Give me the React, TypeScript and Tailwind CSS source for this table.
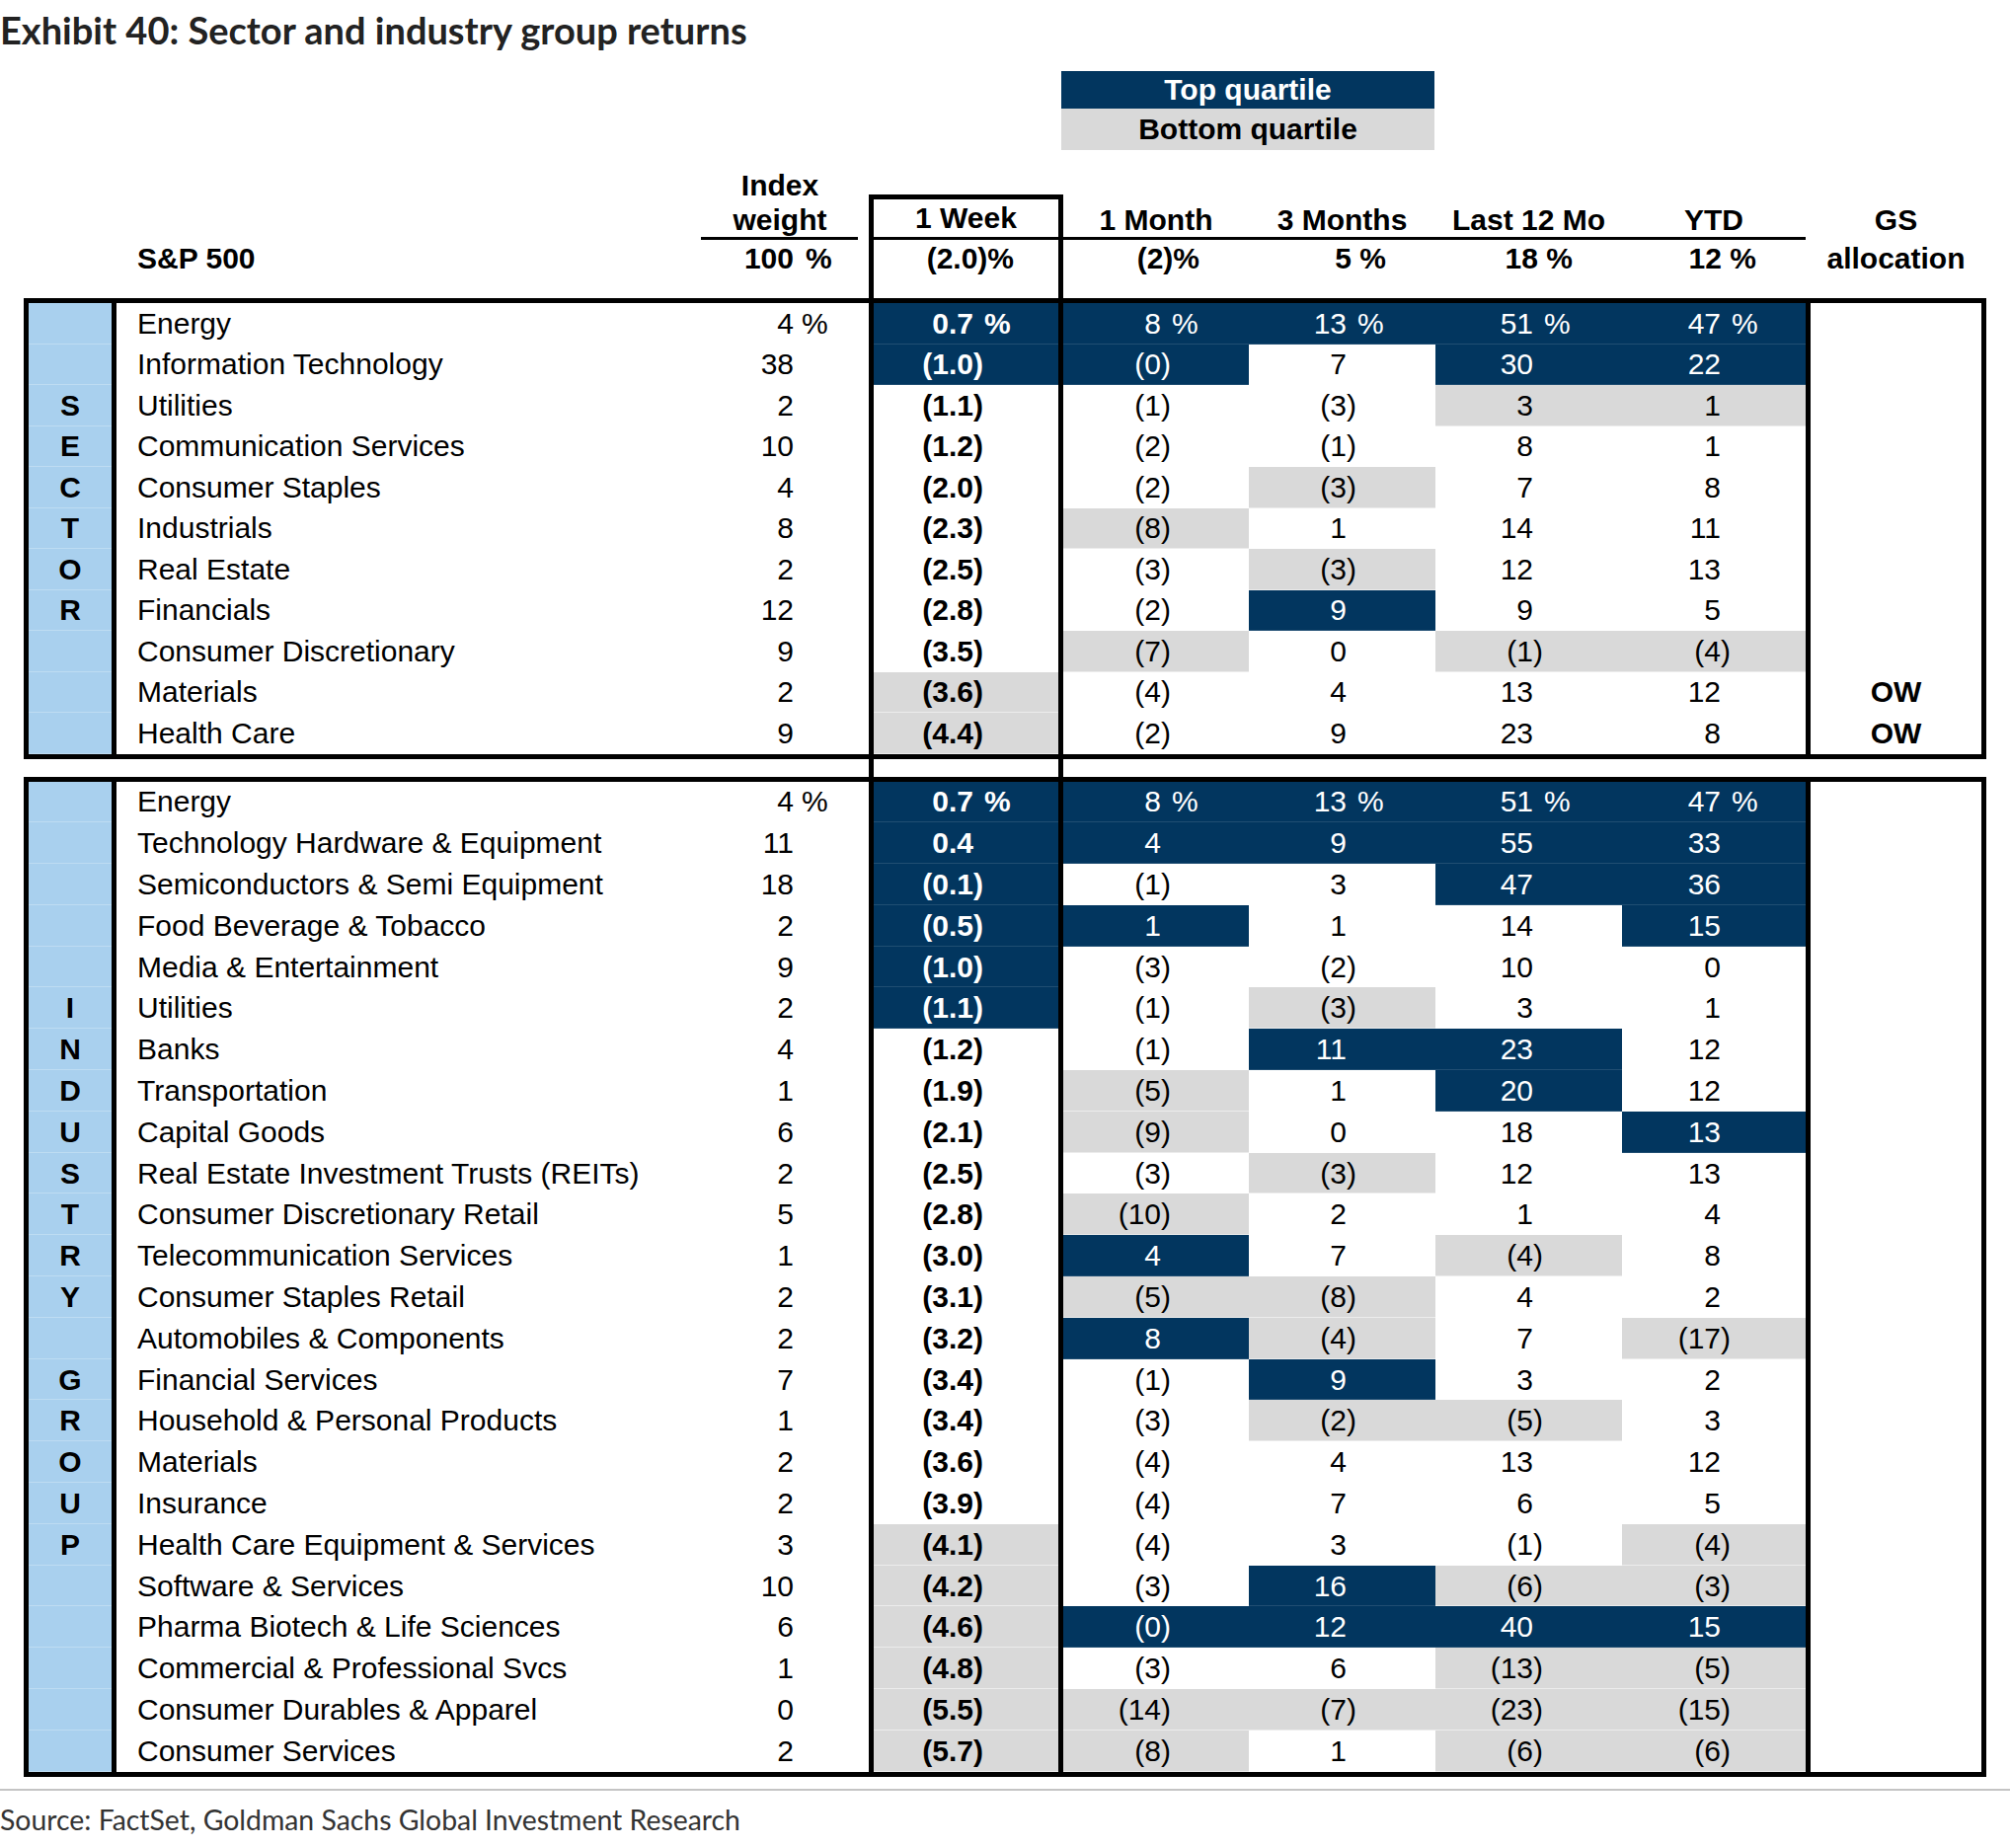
import React from "react";

type Shade = "n" | "g" | "";
type Row = { name: string; w: string; vals: string; gs?: string };

const sector: Row[] = [
  { name: "Energy", w: "4 %", vals: "0.7 %:n,8 %:n,13 %:n,51 %:n,47 %:n" },
  { name: "Information Technology", w: "38", vals: "(1.0):n,(0):n,7:,30:n,22:n" },
  { name: "Utilities", w: "2", vals: "(1.1):,(1):,(3):,3:g,1:g" },
  { name: "Communication Services", w: "10", vals: "(1.2):,(2):,(1):,8:,1:" },
  { name: "Consumer Staples", w: "4", vals: "(2.0):,(2):,(3):g,7:,8:" },
  { name: "Industrials", w: "8", vals: "(2.3):,(8):g,1:,14:,11:" },
  { name: "Real Estate", w: "2", vals: "(2.5):,(3):,(3):g,12:,13:" },
  { name: "Financials", w: "12", vals: "(2.8):,(2):,9:n,9:,5:" },
  { name: "Consumer Discretionary", w: "9", vals: "(3.5):,(7):g,0:,(1):g,(4):g" },
  { name: "Materials", w: "2", vals: "(3.6):g,(4):,4:,13:,12:", gs: "OW" },
  { name: "Health Care", w: "9", vals: "(4.4):g,(2):,9:,23:,8:", gs: "OW" },
];

const industry: Row[] = [
  { name: "Energy", w: "4 %", vals: "0.7 %:n,8 %:n,13 %:n,51 %:n,47 %:n" },
  { name: "Technology Hardware & Equipment", w: "11", vals: "0.4:n,4:n,9:n,55:n,33:n" },
  { name: "Semiconductors & Semi Equipment", w: "18", vals: "(0.1):n,(1):,3:,47:n,36:n" },
  { name: "Food Beverage & Tobacco", w: "2", vals: "(0.5):n,1:n,1:,14:,15:n" },
  { name: "Media & Entertainment", w: "9", vals: "(1.0):n,(3):,(2):,10:,0:" },
  { name: "Utilities", w: "2", vals: "(1.1):n,(1):,(3):g,3:,1:" },
  { name: "Banks", w: "4", vals: "(1.2):,(1):,11:n,23:n,12:" },
  { name: "Transportation", w: "1", vals: "(1.9):,(5):g,1:,20:n,12:" },
  { name: "Capital Goods", w: "6", vals: "(2.1):,(9):g,0:,18:,13:n" },
  { name: "Real Estate Investment Trusts (REITs)", w: "2", vals: "(2.5):,(3):,(3):g,12:,13:" },
  { name: "Consumer Discretionary Retail", w: "5", vals: "(2.8):,(10):g,2:,1:,4:" },
  { name: "Telecommunication Services", w: "1", vals: "(3.0):,4:n,7:,(4):g,8:" },
  { name: "Consumer Staples Retail", w: "2", vals: "(3.1):,(5):g,(8):g,4:,2:" },
  { name: "Automobiles & Components", w: "2", vals: "(3.2):,8:n,(4):g,7:,(17):g" },
  { name: "Financial Services", w: "7", vals: "(3.4):,(1):,9:n,3:,2:" },
  { name: "Household & Personal Products", w: "1", vals: "(3.4):,(3):,(2):g,(5):g,3:" },
  { name: "Materials", w: "2", vals: "(3.6):,(4):,4:,13:,12:" },
  { name: "Insurance", w: "2", vals: "(3.9):,(4):,7:,6:,5:" },
  { name: "Health Care Equipment & Services", w: "3", vals: "(4.1):g,(4):,3:,(1):,(4):g" },
  { name: "Software & Services", w: "10", vals: "(4.2):g,(3):,16:n,(6):g,(3):g" },
  { name: "Pharma Biotech & Life Sciences", w: "6", vals: "(4.6):g,(0):n,12:n,40:n,15:n" },
  { name: "Commercial & Professional Svcs", w: "1", vals: "(4.8):g,(3):,6:,(13):g,(5):g" },
  { name: "Consumer Durables & Apparel", w: "0", vals: "(5.5):g,(14):g,(7):g,(23):g,(15):g" },
  { name: "Consumer Services", w: "2", vals: "(5.7):g,(8):g,1:,(6):g,(6):g" },
];

const sectorLetters = ["", "", "S", "E", "C", "T", "O", "R", "", "", ""];
const industryLetters = [
  "", "", "", "", "", "I", "N", "D", "U", "S", "T", "R", "Y", "", "G", "R", "O", "U", "P", "", "", "", "", "",
];

const shadeClass: Record<Shade, string> = {
  n: "bg-[#02365f] text-white shadow-[inset_0_-1px_0_rgba(255,255,255,0.12)]",
  g: "bg-[#d9d9d9] text-black shadow-[inset_0_-1px_0_rgba(255,255,255,0.5)]",
  "": "bg-white text-black",
};

function parseVals(s: string): [string, Shade][] {
  return s.split(",").map((p) => {
    const i = p.lastIndexOf(":");
    return [p.slice(0, i), p.slice(i + 1) as Shade];
  });
}

function Num({ v, gap }: { v: string; gap: string }) {
  const pct = v.endsWith("%");
  let core = pct ? v.replace(/\s*%$/, "") : v;
  const neg = core.startsWith("(");
  if (neg) core = core.slice(1, -1);
  return (
    <span className="relative whitespace-nowrap">
      {neg ? "(" : ""}
      {core}
      {neg ? <span className="absolute left-full">)</span> : null}
      {pct ? <span className={`absolute left-full ${gap}`}>%</span> : null}
    </span>
  );
}

const dataCols = [
  "w-[188px] pr-[89px]",
  "w-[189px] pr-[90px]",
  "w-[189px] pr-[90px]",
  "w-[186px] pr-[86px]",
];

function TableRow({ r, h, letter }: { r: Row; h: string; letter: string }) {
  const vals = parseVals(r.vals);
  const [week, ...rest] = vals;
  return (
    <div className={`flex ${h}`}>
      <div className="w-[84px] bg-[#a9d0ee] flex items-center justify-center font-bold shadow-[inset_0_-1px_0_rgba(255,255,255,0.25)]">
        {letter}
      </div>
      <div className="w-[5px] bg-black" />
      <div className="w-[592px] pl-[21px] flex items-center whitespace-nowrap">{r.name}</div>
      <div className="w-[170px] flex items-center justify-end pr-[76px]">
        <Num v={r.w} gap="ml-[8px]" />
      </div>
      <div
        className={`w-[197px] border-x-[5px] border-black flex items-center justify-end pr-[86px] font-bold ${shadeClass[week[1]]}`}
      >
        <Num v={week[0]} gap="ml-[11px]" />
      </div>
      {rest.map(([v, s], i) => (
        <div key={i} className={`${dataCols[i]} flex items-center justify-end ${shadeClass[s]}`}>
          <Num v={v} gap="ml-[11px]" />
        </div>
      ))}
      <div className="w-[178px] border-l-[5px] border-black flex items-center justify-center font-bold">
        {r.gs ?? ""}
      </div>
    </div>
  );
}

function HeaderCol({ w, label, value }: { w: string; label: string; value: string }) {
  return (
    <div className={`${w} flex flex-col h-[142px] font-bold`}>
      <div className="h-[45px]" />
      <div className="h-[35px] flex items-center justify-center whitespace-nowrap">{label}</div>
      <div className="h-[3px] bg-black" />
      <div className="h-[37px] flex items-center justify-end pr-[50px] whitespace-nowrap">{value}</div>
      <div className="h-[22px]" />
    </div>
  );
}

export default function App() {
  return (
    <div className="w-[2036px] h-[1872px] bg-white text-black overflow-hidden font-['Liberation_Sans',Arial,sans-serif] text-[30px] leading-none">
      {/* Title */}
      <div className="h-[72px] pt-[8px]">
        <div className="font-['Lato',sans-serif] font-bold text-[38px] leading-[44px] text-[#222] whitespace-nowrap">
          Exhibit 40: Sector and industry group returns
        </div>
      </div>

      {/* Legend */}
      <div className="ml-[1075px] w-[378px] font-bold">
        <div className="h-[38px] bg-[#02365f] text-white flex items-center justify-center">Top quartile</div>
        <div className="h-[42px] bg-[#d9d9d9] text-black flex items-center justify-center">Bottom quartile</div>
      </div>

      {/* Header */}
      <div className="mt-[8px] ml-[29px] flex h-[142px]">
        <div className="w-[89px]" />
        <div className="w-[592px] flex flex-col font-bold">
          <div className="h-[83px]" />
          <div className="h-[37px] pl-[21px] flex items-center">S&amp;P 500</div>
        </div>
        <div className="w-[170px] flex flex-col font-bold">
          <div className="h-[10px]" />
          <div className="h-[35px] pr-[10px] flex items-center justify-center">Index</div>
          <div className="h-[35px] pr-[10px] flex items-center justify-center">weight</div>
          <div className="h-[3px] w-[159px] bg-black" />
          <div className="h-[37px] flex items-center justify-end pr-[76px]">
            <Num v="100 %" gap="ml-[12px]" />
          </div>
        </div>
        <div className="w-[197px] flex flex-col font-bold">
          <div className="h-[37px]" />
          <div className="flex-1 border-x-[5px] border-t-[5px] border-black flex flex-col">
            <div className="h-[38px] flex items-center justify-center">1 Week</div>
            <div className="h-[3px] bg-black" />
            <div className="h-[37px] flex items-center justify-end pr-[45px]">(2.0)%</div>
          </div>
        </div>
        <HeaderCol w="w-[188px]" label="1 Month" value="(2)%" />
        <HeaderCol w="w-[189px]" label="3 Months" value="5 %" />
        <HeaderCol w="w-[189px]" label="Last 12 Mo" value="18 %" />
        <HeaderCol w="w-[186px]" label="YTD" value="12 %" />
        <div className="w-[178px] pl-[5px] flex flex-col font-bold">
          <div className="h-[45px]" />
          <div className="h-[35px] flex items-center justify-center">GS</div>
          <div className="h-[3px]" />
          <div className="h-[37px] flex items-center justify-center">allocation</div>
        </div>
      </div>

      {/* Sector table */}
      <div className="ml-[24px] w-[1988px] border-[5px] border-black">
        {sector.map((r, i) => (
          <TableRow key={i} r={r} h="h-[41.5px]" letter={sectorLetters[i]} />
        ))}
      </div>

      {/* Gap with 1 Week column continuing */}
      <div className="ml-[24px] flex h-[18px]">
        <div className="w-[856px]" />
        <div className="w-[197px] border-x-[5px] border-black" />
      </div>

      {/* Industry table */}
      <div className="ml-[24px] w-[1988px] border-[5px] border-black">
        {industry.map((r, i) => (
          <TableRow key={i} r={r} h="h-[41.8px]" letter={industryLetters[i]} />
        ))}
      </div>

      {/* Footer */}
      <div className="mt-[12px] h-[2px] bg-[#c4c4c4]" />
      <div className="mt-[13px] font-['Lato',sans-serif] text-[28.4px] leading-[32px] text-[#333] whitespace-nowrap">
        Source: FactSet, Goldman Sachs Global Investment Research
      </div>
    </div>
  );
}
